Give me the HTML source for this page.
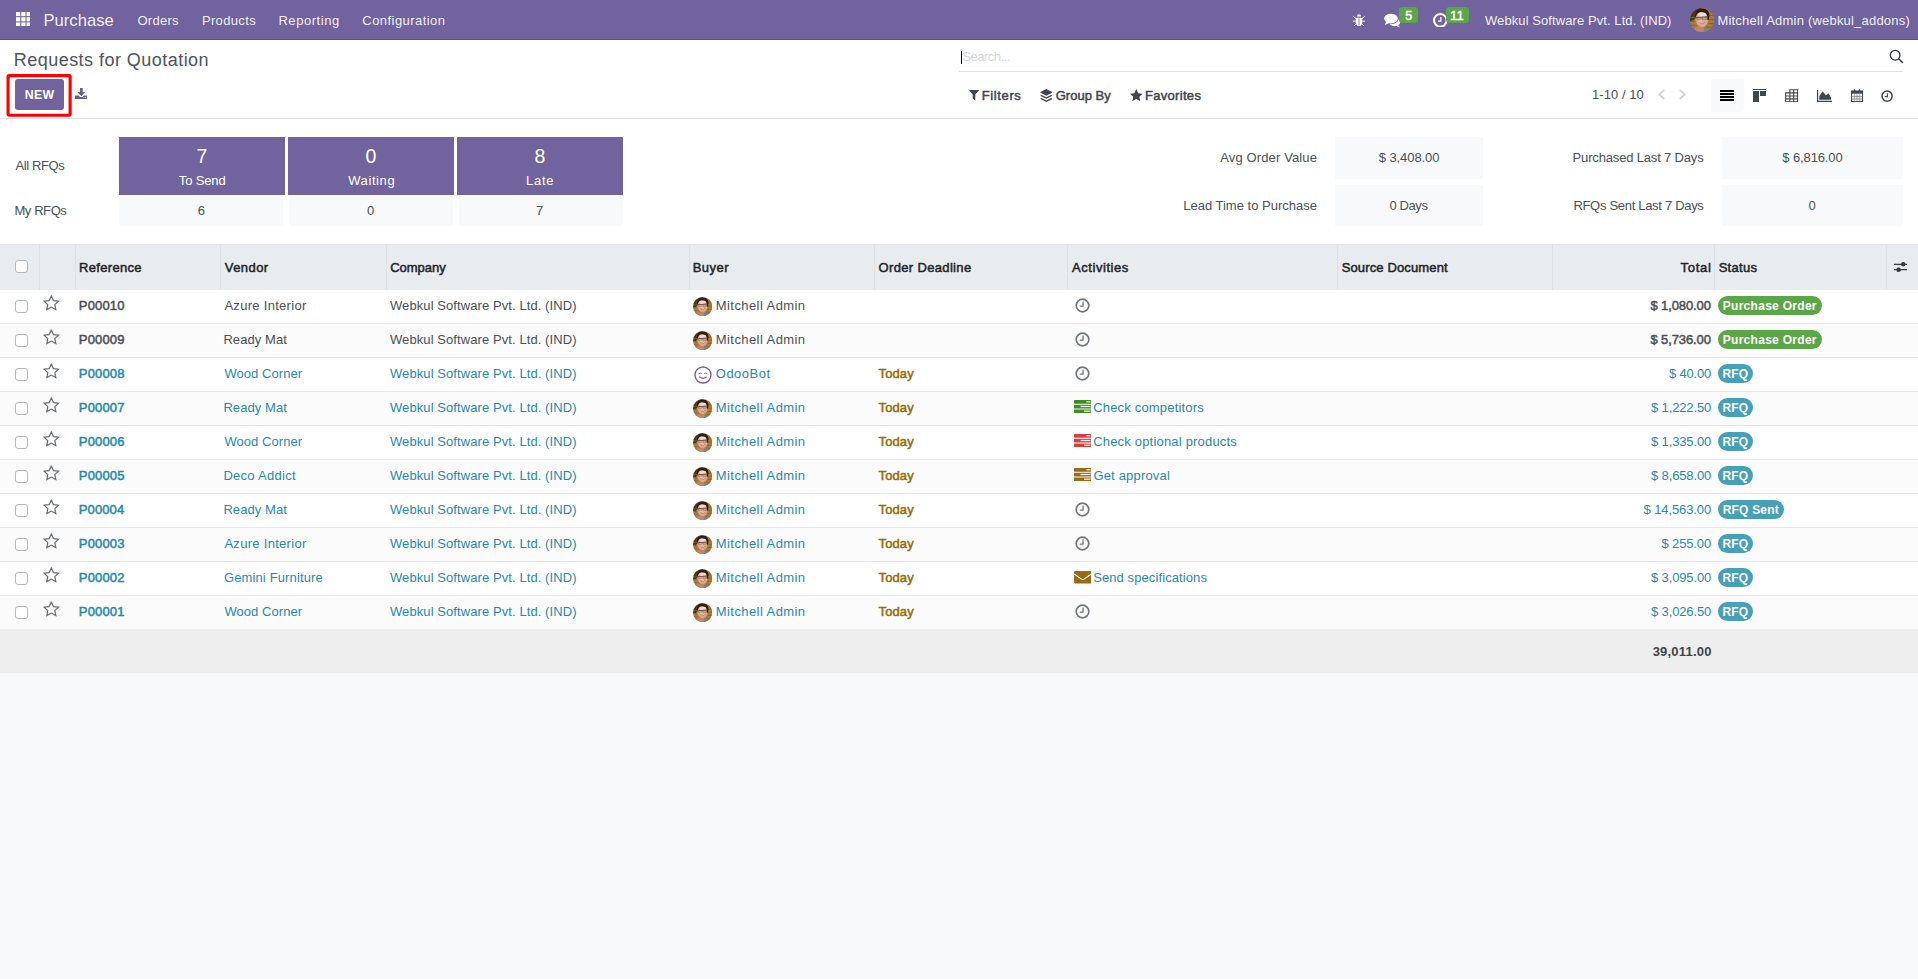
<!DOCTYPE html>
<html lang="en"><head><meta charset="utf-8"><title>Odoo - Requests for Quotation</title>
<style>
html,body{margin:0;padding:0}
body{width:1918px;height:979px;position:relative;overflow:hidden;background:#f8f9fa;font-family:"Liberation Sans", sans-serif;font-size:13px;color:#495057}
#app div,#app svg{position:absolute}
#app span{position:absolute;white-space:pre;line-height:normal}
</style></head><body><div id="app">
<div style="left:0px;top:0px;width:1918px;height:40px;background:#71639e;border-bottom:1px solid #5b4f82;box-sizing:border-box"></div>
<svg style="left:15.7px;top:11.7px;" width="14.8" height="14.6" viewBox="0 0 14 14" preserveAspectRatio="none"><g fill="#fff"><rect x="0" y="0" width="4" height="4"/><rect x="5" y="0" width="4" height="4"/><rect x="10" y="0" width="4" height="4"/><rect x="0" y="5" width="4" height="4"/><rect x="5" y="5" width="4" height="4"/><rect x="10" y="5" width="4" height="4"/><rect x="0" y="10" width="4" height="4"/><rect x="5" y="10" width="4" height="4"/><rect x="10" y="10" width="4" height="4"/></g></svg>
<svg style="left:1353px;top:12.6px;" width="12" height="13.6" viewBox="0 0 12 13.600" preserveAspectRatio="none"><g fill="#fff"><path d="M3.600 4.700h4.800c.5 0 .8.300.8.800v3.700c0 2.300-1.400 4-3.200 4s-3.200-1.700-3.200-4V5.500c0-.5.300-.8.800-.8z"/><path d="M3.900 3.600a2.100 2.400 0 0 1 4.200 0z"/></g><path d="M6 5.200v7.600" stroke="#71639e" stroke-width=".8"/><g stroke="#fff" stroke-width="1" fill="none"><path d="M0 8.200h2.800M9.200 8.200H12M.3 3.300l2.700 2.300M11.700 3.300L9 5.600M.8 13.300l2.400-2.500M11.200 13.300l-2.400-2.500"/></g></svg>
<svg style="left:1383px;top:13px;" width="18" height="15" viewBox="0 0 18 15" preserveAspectRatio="none"><ellipse cx="11.600" cy="9.300" rx="5.600" ry="3.900" fill="#fff"/><path d="M14.500 11.500l2.700 2.900-4.700-1.600z" fill="#fff"/><ellipse cx="7.900" cy="5.700" rx="7.600" ry="5.500" fill="#71639e"/><ellipse cx="7.900" cy="5.600" rx="6.900" ry="4.800" fill="#fff"/><path d="M3.300 8.500L1.700 12l4.800-1.900z" fill="#fff"/></svg>
<div style="left:1399.2px;top:7px;width:19px;height:16px;background:#5ba646;border-radius:3.500px"></div>
<svg style="left:1433px;top:12.6px;" width="14.6" height="14.6" viewBox="0 0 14.600 14.600" preserveAspectRatio="none"><circle cx="7.300" cy="7.300" r="6.300" fill="none" stroke="#fff" stroke-width="2"/><path d="M7.900 3.900v4.200H5" fill="none" stroke="#fff" stroke-width="1.300"/></svg>
<div style="left:1446px;top:7px;width:23px;height:16px;background:#5ba646;border-radius:3.500px"></div>
<svg style="left:0;top:0" width="0" height="0"><defs><clipPath id="avc"><circle cx="12" cy="12" r="12"/></clipPath><filter id="avb" x="-10%" y="-10%" width="120%" height="120%"><feGaussianBlur stdDeviation=".45"/></filter></defs></svg>
<svg style="left:1690px;top:8px;" width="24.2" height="24.2" viewBox="0 0 24 24" preserveAspectRatio="none"><g clip-path="url(#avc)"><g filter="url(#avb)"><rect x="-2" y="-2" width="28" height="28" fill="#a97d38"/><path d="M-2 -2h15l-3 5L4 12l-6 2z" fill="#4d3519"/><path d="M17 -2h9v9l-5-2z" fill="#7a5726"/><path d="M-1 9.500h6M-1 13.500h5.500M-1 17h6M18.500 7.500h7M18.500 11.500h7M18 15.500h8M16.500 19h9" stroke="#7e5b28" stroke-width=".9" fill="none"/><path d="M3 26c0-5 3-7.500 6.500-8.300l5 .3.500 8z" fill="#c18663"/><path d="M12.800 26l1.200-6.800c3 .3 6 1.800 6.800 6.800z" fill="#79828c"/><ellipse cx="11.700" cy="11.300" rx="6.100" ry="7.500" fill="#d9a88f" transform="rotate(-7 11.700 11.300)"/><ellipse cx="12.200" cy="6.600" rx="4.200" ry="2.400" fill="#efdad2"/><ellipse cx="10.300" cy="12.300" rx="2" ry="1.700" fill="#e6c2b0"/><path d="M5.300 9.300C4.300 3 8.500.2 12.600.5c4.700.3 7.200 3.500 6.600 7.800l-.6 3.600-1.500-.2c.6-3.600-.2-5.800-2.200-6.900-2.800-1.300-6.300-.9-7.900.8-.9 1-1.100 2.300-1.200 3.800z" fill="#2a1e17"/><path d="M5.400 9.600l12.600-.9" stroke="#4a3a33" stroke-width=".9" fill="none" opacity=".85"/><path d="M6.700 9.300h4.300v2.300H6.700zM12.300 8.900h4.300v2.400h-4.300z" fill="none" stroke="#5a4740" stroke-width=".55" opacity=".8"/><path d="M9.200 14.100c1.800.9 3.900.8 5.600-.4-.4 2.400-4.600 2.900-5.600.4z" fill="#b5605a"/><path d="M9.800 14.300c1.500.6 3.100.5 4.400-.2-.5 1.300-3.500 1.500-4.400.2z" fill="#fff"/></g></g></svg>
<div style="left:0px;top:40px;width:1918px;height:78px;background:#fff;border-bottom:1px solid #dee2e6"></div>
<svg style="left:5px;top:72px;" width="70" height="48" viewBox="0 0 70 48" preserveAspectRatio="none"><rect x="3.050" y="3.650" width="62.100" height="39.600" rx="1.200" fill="none" stroke="#ff0000" stroke-width="3.100"/></svg>
<div style="left:15px;top:79px;width:49px;height:31px;background:#71639e;border-radius:3px"></div>
<svg style="left:74.5px;top:87.9px;" width="12.4" height="11.1" viewBox="0 0 12.400 11.100" preserveAspectRatio="none"><g fill="#675b94"><path d="M4.900 0h2.800v3.900h2.500L6.300 8.200 2.400 3.900h2.500z"/><path d="M0 7.400h3.400l1.700 1.700h2.400l1.700-1.700h3.200v3.700H0z"/></g><circle cx="10.700" cy="9.500" r=".55" fill="#fff"/><circle cx="9" cy="9.500" r=".45" fill="#fff"/></svg>
<div style="left:959px;top:71px;width:944px;height:1px;background:#dee2e6;"></div>
<div style="left:961px;top:50.5px;width:1px;height:13.5px;background:#000;"></div>
<svg style="left:1889px;top:49px;" width="15" height="15" viewBox="0 0 15 15" preserveAspectRatio="none"><circle cx="6.150" cy="6.200" r="4.850" fill="none" stroke="#2f353c" stroke-width="1.300"/><path d="M9.700 9.800l3.800 3.700" stroke="#2f353c" stroke-width="1.500" stroke-linecap="round"/></svg>
<svg style="left:969.1px;top:90.4px;" width="10" height="10.6" viewBox="0 0 10 10.600" preserveAspectRatio="none"><path d="M.3 0h9.400q.5.100.2.600L6.300 4.600v6l-2.600-2V4.600L.100.600Q-.2.100.300 0z" fill="#3f4650"/></svg>
<svg style="left:1039.8px;top:88.8px;" width="12.6" height="13.1" viewBox="0 0 12.500 13" preserveAspectRatio="none"><g fill="#3f4650"><path d="M6.250 0l6.250 3.300-6.250 3.300L0 3.300z"/><path d="M1.600 5.900L0 6.700l6.250 3.100 6.250-3.100-1.600-.8-4.650 2.300z"/><path d="M1.600 9L0 9.800l6.250 3.100 6.250-3.100L10.900 9l-4.650 2.300z"/></g></svg>
<svg style="left:1130px;top:89px;" width="12.6" height="12.1" viewBox="0 0 12.500 12" preserveAspectRatio="none"><path d="M6.250 0l1.900 4.100 4.350.5-3.200 3 .85 4.400-3.900-2.200L2.350 12l.85-4.400L0 4.600l4.350-.5z" fill="#3f4650"/></svg>
<svg style="left:1657px;top:89px;" width="9" height="11" viewBox="0 0 9 11" preserveAspectRatio="none"><path d="M7.200 1L2.200 5.500l5 4.500" fill="none" stroke="#ced4da" stroke-width="1.700"/></svg>
<svg style="left:1678px;top:89px;" width="9" height="11" viewBox="0 0 9 11" preserveAspectRatio="none"><path d="M1.800 1l5 4.500-5 4.500" fill="none" stroke="#ced4da" stroke-width="1.700"/></svg>
<div style="left:1711px;top:79px;width:33px;height:33px;background:#f8f9fa;border-radius:3px"></div>
<div style="left:1720px;top:90px;width:14px;height:2.2px;background:#000;"></div>
<div style="left:1720px;top:93px;width:14px;height:2.2px;background:#000;"></div>
<div style="left:1720px;top:96px;width:14px;height:2.2px;background:#000;"></div>
<div style="left:1720px;top:99px;width:14px;height:2.2px;background:#000;"></div>
<div style="left:1753px;top:89px;width:13.3px;height:1px;background:#3f4650;"></div>
<div style="left:1753px;top:91px;width:6px;height:10.5px;background:#3f4650;"></div>
<div style="left:1760.2px;top:91px;width:6.1px;height:4.9px;background:#3f4650;"></div>
<svg style="left:1784.5px;top:88.6px;" width="14" height="13.4" viewBox="0 0 14 13.400" preserveAspectRatio="none"><g fill="none" stroke="#3f4650" stroke-width="1.050"><path d="M4.800 .7h7.800v12H.600V3.900H4.800zM.600 7h12M.600 9.900h12M4.800 3.900h7.800M4.800 .7v12M8.700 .7v12"/></g></svg>
<svg style="left:1816.5px;top:89.5px;" width="15.5" height="12" viewBox="0 0 15.500 12" preserveAspectRatio="none"><path d="M.600 0v11.400h14.900" fill="none" stroke="#3f4650" stroke-width="1.200"/><path d="M2.300 9.800V6.300L5.600 1.300l3.300 3.900 2.600-2 2.500 4.400v2.200z" fill="#3f4650"/></svg>
<svg style="left:1850.5px;top:88.8px;" width="13" height="13" viewBox="0 0 13 13" preserveAspectRatio="none"><rect x=".5" y="2" width="11" height="10.500" fill="#fff" stroke="#3f4650" stroke-width="1"/><rect x=".5" y="2" width="11" height="2.700" fill="#3f4650"/><g fill="none" stroke="#6d747c" stroke-width=".7"><path d="M.5 7.400h11M.5 10h11M3.300 4.700v7.800M6 4.700v7.800M8.700 4.700v7.800"/></g><g fill="#3f4650"><rect x="2.700" y=".3" width="1.600" height="3" rx=".8"/><rect x="7.700" y=".3" width="1.600" height="3" rx=".8"/></g></svg>
<svg style="left:1881.3px;top:89.8px;" width="12.2" height="12.2" viewBox="0 0 12 12" preserveAspectRatio="none"><circle cx="6" cy="6" r="5" fill="none" stroke="#3f4650" stroke-width="1.500"/><path d="M6.300 3.200v3.300H3.800" fill="none" stroke="#3f4650" stroke-width="1.100"/></svg>
<div style="left:0px;top:119px;width:1918px;height:125px;background:#fff;"></div>
<div style="left:119px;top:137px;width:166px;height:58px;background:#71639e;"></div>
<div style="left:119px;top:195px;width:164px;height:31px;background:#f8f9fa;border-radius:0 0 3px 3px"></div>
<div style="left:288px;top:137px;width:166px;height:58px;background:#71639e;"></div>
<div style="left:289px;top:195px;width:164px;height:31px;background:#f8f9fa;border-radius:0 0 3px 3px"></div>
<div style="left:457px;top:137px;width:166px;height:58px;background:#71639e;"></div>
<div style="left:459px;top:195px;width:164px;height:31px;background:#f8f9fa;border-radius:0 0 3px 3px"></div>
<div style="left:1335px;top:137px;width:148px;height:42px;background:#f8f9fa;"></div>
<div style="left:1335px;top:185px;width:148px;height:41px;background:#f8f9fa;"></div>
<div style="left:1722px;top:137px;width:181px;height:42px;background:#f8f9fa;"></div>
<div style="left:1722px;top:185px;width:181px;height:41px;background:#f8f9fa;"></div>
<div style="left:0px;top:244px;width:1918px;height:46px;background:#e9ecef;border-top:1px solid #dee2e6;box-sizing:border-box"></div>
<div style="left:39px;top:245px;width:1px;height:45px;background:#dde1e6;"></div>
<div style="left:75px;top:245px;width:1px;height:45px;background:#dde1e6;"></div>
<div style="left:220px;top:245px;width:1px;height:45px;background:#dde1e6;"></div>
<div style="left:386px;top:245px;width:1px;height:45px;background:#dde1e6;"></div>
<div style="left:689px;top:245px;width:1px;height:45px;background:#dde1e6;"></div>
<div style="left:874px;top:245px;width:1px;height:45px;background:#dde1e6;"></div>
<div style="left:1067px;top:245px;width:1px;height:45px;background:#dde1e6;"></div>
<div style="left:1337px;top:245px;width:1px;height:45px;background:#dde1e6;"></div>
<div style="left:1552px;top:245px;width:1px;height:45px;background:#dde1e6;"></div>
<div style="left:1714px;top:245px;width:1px;height:45px;background:#dde1e6;"></div>
<div style="left:1886px;top:245px;width:1px;height:45px;background:#dde1e6;"></div>
<div style="left:15px;top:260px;width:13px;height:13px;background:#fff;border:1px solid #b6b8ba;border-radius:3px;box-sizing:border-box"></div>
<svg style="left:1893.5px;top:261px;" width="13.5" height="12" viewBox="0 0 13.500 12" preserveAspectRatio="none"><g stroke="#343a40" stroke-width="1.300"><path d="M0 3.300h13.500M0 8.700h13.500"/></g><circle cx="9.300" cy="3.300" r="2.300" fill="#343a40"/><circle cx="4.600" cy="8.700" r="2.300" fill="#343a40"/></svg>
<div style="left:0px;top:290px;width:1918px;height:34px;background:#fff;border-bottom:1px solid #e3e7ea;box-sizing:border-box"></div>
<div style="left:15px;top:300px;width:13px;height:13px;background:#fff;border:1px solid #b6b8ba;border-radius:3px;box-sizing:border-box"></div>
<svg style="left:42.6px;top:295.3px;overflow:visible" width="16.6" height="16" viewBox="0 0 16 16" preserveAspectRatio="none"><path d="M8 1.100l2.100 4.500 4.800.6-3.500 3.400.9 4.900L8 12.100l-4.300 2.400.9-4.900L1.100 6.200l4.800-.6z" fill="none" stroke="#6a6e73" stroke-width="1.200" stroke-linejoin="miter"/></svg>
<svg style="left:692.7px;top:296.8px;" width="19.3" height="19.3" viewBox="0 0 24 24" preserveAspectRatio="none"><g clip-path="url(#avc)"><g filter="url(#avb)"><rect x="-2" y="-2" width="28" height="28" fill="#a97d38"/><path d="M-2 -2h15l-3 5L4 12l-6 2z" fill="#4d3519"/><path d="M17 -2h9v9l-5-2z" fill="#7a5726"/><path d="M-1 9.500h6M-1 13.500h5.500M-1 17h6M18.500 7.500h7M18.500 11.500h7M18 15.500h8M16.500 19h9" stroke="#7e5b28" stroke-width=".9" fill="none"/><path d="M3 26c0-5 3-7.500 6.500-8.300l5 .3.500 8z" fill="#c18663"/><path d="M12.800 26l1.200-6.800c3 .3 6 1.800 6.800 6.800z" fill="#79828c"/><ellipse cx="11.700" cy="11.300" rx="6.100" ry="7.500" fill="#d9a88f" transform="rotate(-7 11.700 11.300)"/><ellipse cx="12.200" cy="6.600" rx="4.200" ry="2.400" fill="#efdad2"/><ellipse cx="10.300" cy="12.300" rx="2" ry="1.700" fill="#e6c2b0"/><path d="M5.300 9.300C4.300 3 8.500.2 12.600.5c4.700.3 7.200 3.500 6.600 7.800l-.6 3.600-1.500-.2c.6-3.600-.2-5.800-2.200-6.900-2.800-1.300-6.300-.9-7.900.8-.9 1-1.100 2.300-1.200 3.800z" fill="#2a1e17"/><path d="M5.400 9.600l12.600-.9" stroke="#4a3a33" stroke-width=".9" fill="none" opacity=".85"/><path d="M6.700 9.300h4.300v2.300H6.700zM12.300 8.900h4.300v2.400h-4.300z" fill="none" stroke="#5a4740" stroke-width=".55" opacity=".8"/><path d="M9.200 14.100c1.800.9 3.900.8 5.600-.4-.4 2.400-4.600 2.900-5.600.4z" fill="#b5605a"/><path d="M9.800 14.300c1.500.6 3.100.5 4.400-.2-.5 1.300-3.500 1.500-4.400.2z" fill="#fff"/></g></g></svg>
<svg style="left:1074.7px;top:297.7px;" width="15" height="15" viewBox="0 0 15 15" preserveAspectRatio="none"><circle cx="7.500" cy="7.500" r="6.300" fill="none" stroke="#6f767d" stroke-width="1.700"/><path d="M8 3.600v4.500H4.700" fill="none" stroke="#6f767d" stroke-width="1.300"/></svg>
<div style="left:1718px;top:296px;width:104px;height:19px;background:#5ba647;border-radius:10px"></div>
<div style="left:0px;top:324px;width:1918px;height:34px;background:#fbfbfb;border-bottom:1px solid #e3e7ea;box-sizing:border-box"></div>
<div style="left:15px;top:334px;width:13px;height:13px;background:#fff;border:1px solid #b6b8ba;border-radius:3px;box-sizing:border-box"></div>
<svg style="left:42.6px;top:329.3px;overflow:visible" width="16.6" height="16" viewBox="0 0 16 16" preserveAspectRatio="none"><path d="M8 1.100l2.100 4.500 4.800.6-3.500 3.400.9 4.900L8 12.100l-4.300 2.400.9-4.900L1.100 6.200l4.800-.6z" fill="none" stroke="#6a6e73" stroke-width="1.200" stroke-linejoin="miter"/></svg>
<svg style="left:692.7px;top:330.8px;" width="19.3" height="19.3" viewBox="0 0 24 24" preserveAspectRatio="none"><g clip-path="url(#avc)"><g filter="url(#avb)"><rect x="-2" y="-2" width="28" height="28" fill="#a97d38"/><path d="M-2 -2h15l-3 5L4 12l-6 2z" fill="#4d3519"/><path d="M17 -2h9v9l-5-2z" fill="#7a5726"/><path d="M-1 9.500h6M-1 13.500h5.500M-1 17h6M18.500 7.500h7M18.500 11.500h7M18 15.500h8M16.500 19h9" stroke="#7e5b28" stroke-width=".9" fill="none"/><path d="M3 26c0-5 3-7.500 6.500-8.300l5 .3.500 8z" fill="#c18663"/><path d="M12.800 26l1.200-6.800c3 .3 6 1.800 6.800 6.800z" fill="#79828c"/><ellipse cx="11.700" cy="11.300" rx="6.100" ry="7.500" fill="#d9a88f" transform="rotate(-7 11.700 11.300)"/><ellipse cx="12.200" cy="6.600" rx="4.200" ry="2.400" fill="#efdad2"/><ellipse cx="10.300" cy="12.300" rx="2" ry="1.700" fill="#e6c2b0"/><path d="M5.300 9.300C4.300 3 8.500.2 12.600.5c4.700.3 7.200 3.500 6.600 7.800l-.6 3.600-1.500-.2c.6-3.600-.2-5.800-2.200-6.900-2.800-1.300-6.300-.9-7.900.8-.9 1-1.100 2.300-1.200 3.800z" fill="#2a1e17"/><path d="M5.400 9.600l12.600-.9" stroke="#4a3a33" stroke-width=".9" fill="none" opacity=".85"/><path d="M6.700 9.300h4.300v2.300H6.700zM12.300 8.900h4.300v2.400h-4.300z" fill="none" stroke="#5a4740" stroke-width=".55" opacity=".8"/><path d="M9.200 14.100c1.800.9 3.900.8 5.600-.4-.4 2.400-4.600 2.900-5.600.4z" fill="#b5605a"/><path d="M9.800 14.300c1.500.6 3.100.5 4.400-.2-.5 1.300-3.500 1.500-4.400.2z" fill="#fff"/></g></g></svg>
<svg style="left:1074.7px;top:331.7px;" width="15" height="15" viewBox="0 0 15 15" preserveAspectRatio="none"><circle cx="7.500" cy="7.500" r="6.300" fill="none" stroke="#6f767d" stroke-width="1.700"/><path d="M8 3.600v4.500H4.700" fill="none" stroke="#6f767d" stroke-width="1.300"/></svg>
<div style="left:1718px;top:330px;width:104px;height:19px;background:#5ba647;border-radius:10px"></div>
<div style="left:0px;top:358px;width:1918px;height:34px;background:#fff;border-bottom:1px solid #e3e7ea;box-sizing:border-box"></div>
<div style="left:15px;top:368px;width:13px;height:13px;background:#fff;border:1px solid #b6b8ba;border-radius:3px;box-sizing:border-box"></div>
<svg style="left:42.6px;top:363.3px;overflow:visible" width="16.6" height="16" viewBox="0 0 16 16" preserveAspectRatio="none"><path d="M8 1.100l2.100 4.500 4.800.6-3.500 3.400.9 4.900L8 12.100l-4.300 2.400.9-4.900L1.100 6.200l4.800-.6z" fill="none" stroke="#6a6e73" stroke-width="1.200" stroke-linejoin="miter"/></svg>
<svg style="left:693.5px;top:365.5px;" width="18" height="18" viewBox="0 0 18 18" preserveAspectRatio="none"><circle cx="9" cy="9" r="8" fill="#fff" stroke="#8d5f85" stroke-width="1.400"/><path d="M4.700 7.600q1.500-1 3 0M10.300 7.600q1.500-1 3 0" fill="none" stroke="#8d5f85" stroke-width="1"/><path d="M5.200 10.800q3.800 3.200 7.600 0" fill="none" stroke="#8d5f85" stroke-width="1.200"/></svg>
<svg style="left:1074.7px;top:365.7px;" width="15" height="15" viewBox="0 0 15 15" preserveAspectRatio="none"><circle cx="7.500" cy="7.500" r="6.300" fill="none" stroke="#6f767d" stroke-width="1.700"/><path d="M8 3.600v4.500H4.700" fill="none" stroke="#6f767d" stroke-width="1.300"/></svg>
<div style="left:1718px;top:364px;width:35px;height:19px;background:#46a0b8;border-radius:10px"></div>
<div style="left:0px;top:392px;width:1918px;height:34px;background:#fbfbfb;border-bottom:1px solid #e3e7ea;box-sizing:border-box"></div>
<div style="left:15px;top:402px;width:13px;height:13px;background:#fff;border:1px solid #b6b8ba;border-radius:3px;box-sizing:border-box"></div>
<svg style="left:42.6px;top:397.3px;overflow:visible" width="16.6" height="16" viewBox="0 0 16 16" preserveAspectRatio="none"><path d="M8 1.100l2.100 4.500 4.800.6-3.500 3.400.9 4.900L8 12.100l-4.300 2.400.9-4.900L1.100 6.200l4.800-.6z" fill="none" stroke="#6a6e73" stroke-width="1.200" stroke-linejoin="miter"/></svg>
<svg style="left:692.7px;top:398.8px;" width="19.3" height="19.3" viewBox="0 0 24 24" preserveAspectRatio="none"><g clip-path="url(#avc)"><g filter="url(#avb)"><rect x="-2" y="-2" width="28" height="28" fill="#a97d38"/><path d="M-2 -2h15l-3 5L4 12l-6 2z" fill="#4d3519"/><path d="M17 -2h9v9l-5-2z" fill="#7a5726"/><path d="M-1 9.500h6M-1 13.500h5.500M-1 17h6M18.500 7.500h7M18.500 11.500h7M18 15.500h8M16.500 19h9" stroke="#7e5b28" stroke-width=".9" fill="none"/><path d="M3 26c0-5 3-7.500 6.500-8.300l5 .3.500 8z" fill="#c18663"/><path d="M12.800 26l1.200-6.800c3 .3 6 1.800 6.800 6.800z" fill="#79828c"/><ellipse cx="11.700" cy="11.300" rx="6.100" ry="7.500" fill="#d9a88f" transform="rotate(-7 11.700 11.300)"/><ellipse cx="12.200" cy="6.600" rx="4.200" ry="2.400" fill="#efdad2"/><ellipse cx="10.300" cy="12.300" rx="2" ry="1.700" fill="#e6c2b0"/><path d="M5.300 9.300C4.300 3 8.500.2 12.600.5c4.700.3 7.200 3.500 6.600 7.800l-.6 3.600-1.500-.2c.6-3.600-.2-5.800-2.200-6.900-2.800-1.300-6.300-.9-7.900.8-.9 1-1.100 2.300-1.200 3.800z" fill="#2a1e17"/><path d="M5.400 9.600l12.600-.9" stroke="#4a3a33" stroke-width=".9" fill="none" opacity=".85"/><path d="M6.700 9.300h4.300v2.300H6.700zM12.300 8.900h4.300v2.400h-4.300z" fill="none" stroke="#5a4740" stroke-width=".55" opacity=".8"/><path d="M9.200 14.100c1.800.9 3.900.8 5.600-.4-.4 2.400-4.600 2.900-5.600.4z" fill="#b5605a"/><path d="M9.800 14.300c1.500.6 3.100.5 4.400-.2-.5 1.300-3.500 1.500-4.400.2z" fill="#fff"/></g></g></svg>
<svg style="left:1073.6px;top:399.7px;" width="17.5" height="13.2" viewBox="0 0 17.500 13.200" preserveAspectRatio="none"><g fill="#3f8c1f"><rect y="0" width="17.500" height="3.700" rx=".4"/><rect y="4.700" width="17.500" height="3.700" rx=".4"/><rect y="9.400" width="17.500" height="3.700" rx=".4"/></g><g fill="#fff" opacity=".92"><rect x="12.300" y="1.200" width="4.200" height="1.200"/><rect x="6.500" y="5.900" width="10" height="1.200"/><rect x="10" y="10.600" width="6.500" height="1.200"/></g></svg>
<div style="left:1718px;top:398px;width:35px;height:19px;background:#46a0b8;border-radius:10px"></div>
<div style="left:0px;top:426px;width:1918px;height:34px;background:#fff;border-bottom:1px solid #e3e7ea;box-sizing:border-box"></div>
<div style="left:15px;top:436px;width:13px;height:13px;background:#fff;border:1px solid #b6b8ba;border-radius:3px;box-sizing:border-box"></div>
<svg style="left:42.6px;top:431.3px;overflow:visible" width="16.6" height="16" viewBox="0 0 16 16" preserveAspectRatio="none"><path d="M8 1.100l2.100 4.500 4.800.6-3.500 3.400.9 4.900L8 12.100l-4.300 2.400.9-4.900L1.100 6.200l4.800-.6z" fill="none" stroke="#6a6e73" stroke-width="1.200" stroke-linejoin="miter"/></svg>
<svg style="left:692.7px;top:432.8px;" width="19.3" height="19.3" viewBox="0 0 24 24" preserveAspectRatio="none"><g clip-path="url(#avc)"><g filter="url(#avb)"><rect x="-2" y="-2" width="28" height="28" fill="#a97d38"/><path d="M-2 -2h15l-3 5L4 12l-6 2z" fill="#4d3519"/><path d="M17 -2h9v9l-5-2z" fill="#7a5726"/><path d="M-1 9.500h6M-1 13.500h5.500M-1 17h6M18.500 7.500h7M18.500 11.500h7M18 15.500h8M16.500 19h9" stroke="#7e5b28" stroke-width=".9" fill="none"/><path d="M3 26c0-5 3-7.500 6.500-8.300l5 .3.500 8z" fill="#c18663"/><path d="M12.800 26l1.200-6.800c3 .3 6 1.800 6.800 6.800z" fill="#79828c"/><ellipse cx="11.700" cy="11.300" rx="6.100" ry="7.500" fill="#d9a88f" transform="rotate(-7 11.700 11.300)"/><ellipse cx="12.200" cy="6.600" rx="4.200" ry="2.400" fill="#efdad2"/><ellipse cx="10.300" cy="12.300" rx="2" ry="1.700" fill="#e6c2b0"/><path d="M5.300 9.300C4.300 3 8.500.2 12.600.5c4.700.3 7.200 3.500 6.600 7.800l-.6 3.600-1.500-.2c.6-3.600-.2-5.800-2.200-6.900-2.800-1.300-6.300-.9-7.900.8-.9 1-1.100 2.300-1.200 3.800z" fill="#2a1e17"/><path d="M5.400 9.600l12.600-.9" stroke="#4a3a33" stroke-width=".9" fill="none" opacity=".85"/><path d="M6.700 9.300h4.300v2.300H6.700zM12.300 8.900h4.300v2.400h-4.300z" fill="none" stroke="#5a4740" stroke-width=".55" opacity=".8"/><path d="M9.200 14.100c1.800.9 3.900.8 5.600-.4-.4 2.400-4.600 2.900-5.600.4z" fill="#b5605a"/><path d="M9.800 14.300c1.500.6 3.100.5 4.400-.2-.5 1.300-3.500 1.500-4.400.2z" fill="#fff"/></g></g></svg>
<svg style="left:1073.6px;top:433.7px;" width="17.5" height="13.2" viewBox="0 0 17.500 13.200" preserveAspectRatio="none"><g fill="#d93f3f"><rect y="0" width="17.500" height="3.700" rx=".4"/><rect y="4.700" width="17.500" height="3.700" rx=".4"/><rect y="9.400" width="17.500" height="3.700" rx=".4"/></g><g fill="#fff" opacity=".92"><rect x="12.300" y="1.200" width="4.200" height="1.200"/><rect x="6.500" y="5.900" width="10" height="1.200"/><rect x="10" y="10.600" width="6.500" height="1.200"/></g></svg>
<div style="left:1718px;top:432px;width:35px;height:19px;background:#46a0b8;border-radius:10px"></div>
<div style="left:0px;top:460px;width:1918px;height:34px;background:#fbfbfb;border-bottom:1px solid #e3e7ea;box-sizing:border-box"></div>
<div style="left:15px;top:470px;width:13px;height:13px;background:#fff;border:1px solid #b6b8ba;border-radius:3px;box-sizing:border-box"></div>
<svg style="left:42.6px;top:465.3px;overflow:visible" width="16.6" height="16" viewBox="0 0 16 16" preserveAspectRatio="none"><path d="M8 1.100l2.100 4.500 4.800.6-3.500 3.400.9 4.900L8 12.100l-4.300 2.400.9-4.900L1.100 6.200l4.800-.6z" fill="none" stroke="#6a6e73" stroke-width="1.200" stroke-linejoin="miter"/></svg>
<svg style="left:692.7px;top:466.8px;" width="19.3" height="19.3" viewBox="0 0 24 24" preserveAspectRatio="none"><g clip-path="url(#avc)"><g filter="url(#avb)"><rect x="-2" y="-2" width="28" height="28" fill="#a97d38"/><path d="M-2 -2h15l-3 5L4 12l-6 2z" fill="#4d3519"/><path d="M17 -2h9v9l-5-2z" fill="#7a5726"/><path d="M-1 9.500h6M-1 13.500h5.500M-1 17h6M18.500 7.500h7M18.500 11.500h7M18 15.500h8M16.500 19h9" stroke="#7e5b28" stroke-width=".9" fill="none"/><path d="M3 26c0-5 3-7.500 6.500-8.300l5 .3.500 8z" fill="#c18663"/><path d="M12.800 26l1.200-6.800c3 .3 6 1.800 6.800 6.800z" fill="#79828c"/><ellipse cx="11.700" cy="11.300" rx="6.100" ry="7.500" fill="#d9a88f" transform="rotate(-7 11.700 11.300)"/><ellipse cx="12.200" cy="6.600" rx="4.200" ry="2.400" fill="#efdad2"/><ellipse cx="10.300" cy="12.300" rx="2" ry="1.700" fill="#e6c2b0"/><path d="M5.300 9.300C4.300 3 8.500.2 12.600.5c4.700.3 7.200 3.500 6.600 7.800l-.6 3.600-1.500-.2c.6-3.600-.2-5.800-2.200-6.900-2.800-1.300-6.300-.9-7.900.8-.9 1-1.100 2.300-1.200 3.800z" fill="#2a1e17"/><path d="M5.400 9.600l12.600-.9" stroke="#4a3a33" stroke-width=".9" fill="none" opacity=".85"/><path d="M6.700 9.300h4.300v2.300H6.700zM12.300 8.900h4.300v2.400h-4.300z" fill="none" stroke="#5a4740" stroke-width=".55" opacity=".8"/><path d="M9.200 14.100c1.800.9 3.900.8 5.600-.4-.4 2.400-4.600 2.900-5.600.4z" fill="#b5605a"/><path d="M9.800 14.300c1.500.6 3.100.5 4.400-.2-.5 1.300-3.500 1.500-4.400.2z" fill="#fff"/></g></g></svg>
<svg style="left:1073.6px;top:467.7px;" width="17.5" height="13.2" viewBox="0 0 17.500 13.200" preserveAspectRatio="none"><g fill="#9a6b14"><rect y="0" width="17.500" height="3.700" rx=".4"/><rect y="4.700" width="17.500" height="3.700" rx=".4"/><rect y="9.400" width="17.500" height="3.700" rx=".4"/></g><g fill="#fff" opacity=".92"><rect x="12.300" y="1.200" width="4.200" height="1.200"/><rect x="6.500" y="5.900" width="10" height="1.200"/><rect x="10" y="10.600" width="6.500" height="1.200"/></g></svg>
<div style="left:1718px;top:466px;width:35px;height:19px;background:#46a0b8;border-radius:10px"></div>
<div style="left:0px;top:494px;width:1918px;height:34px;background:#fff;border-bottom:1px solid #e3e7ea;box-sizing:border-box"></div>
<div style="left:15px;top:504px;width:13px;height:13px;background:#fff;border:1px solid #b6b8ba;border-radius:3px;box-sizing:border-box"></div>
<svg style="left:42.6px;top:499.3px;overflow:visible" width="16.6" height="16" viewBox="0 0 16 16" preserveAspectRatio="none"><path d="M8 1.100l2.100 4.500 4.800.6-3.500 3.400.9 4.900L8 12.100l-4.300 2.400.9-4.900L1.100 6.200l4.800-.6z" fill="none" stroke="#6a6e73" stroke-width="1.200" stroke-linejoin="miter"/></svg>
<svg style="left:692.7px;top:500.8px;" width="19.3" height="19.3" viewBox="0 0 24 24" preserveAspectRatio="none"><g clip-path="url(#avc)"><g filter="url(#avb)"><rect x="-2" y="-2" width="28" height="28" fill="#a97d38"/><path d="M-2 -2h15l-3 5L4 12l-6 2z" fill="#4d3519"/><path d="M17 -2h9v9l-5-2z" fill="#7a5726"/><path d="M-1 9.500h6M-1 13.500h5.500M-1 17h6M18.500 7.500h7M18.500 11.500h7M18 15.500h8M16.500 19h9" stroke="#7e5b28" stroke-width=".9" fill="none"/><path d="M3 26c0-5 3-7.500 6.500-8.300l5 .3.500 8z" fill="#c18663"/><path d="M12.800 26l1.200-6.800c3 .3 6 1.800 6.800 6.800z" fill="#79828c"/><ellipse cx="11.700" cy="11.300" rx="6.100" ry="7.500" fill="#d9a88f" transform="rotate(-7 11.700 11.300)"/><ellipse cx="12.200" cy="6.600" rx="4.200" ry="2.400" fill="#efdad2"/><ellipse cx="10.300" cy="12.300" rx="2" ry="1.700" fill="#e6c2b0"/><path d="M5.300 9.300C4.300 3 8.500.2 12.600.5c4.700.3 7.200 3.500 6.600 7.800l-.6 3.600-1.500-.2c.6-3.600-.2-5.800-2.200-6.900-2.800-1.300-6.300-.9-7.900.8-.9 1-1.100 2.300-1.200 3.800z" fill="#2a1e17"/><path d="M5.400 9.600l12.600-.9" stroke="#4a3a33" stroke-width=".9" fill="none" opacity=".85"/><path d="M6.700 9.300h4.300v2.300H6.700zM12.300 8.900h4.300v2.400h-4.300z" fill="none" stroke="#5a4740" stroke-width=".55" opacity=".8"/><path d="M9.200 14.100c1.800.9 3.900.8 5.600-.4-.4 2.400-4.600 2.900-5.600.4z" fill="#b5605a"/><path d="M9.800 14.300c1.500.6 3.100.5 4.400-.2-.5 1.300-3.500 1.500-4.400.2z" fill="#fff"/></g></g></svg>
<svg style="left:1074.7px;top:501.7px;" width="15" height="15" viewBox="0 0 15 15" preserveAspectRatio="none"><circle cx="7.500" cy="7.500" r="6.300" fill="none" stroke="#6f767d" stroke-width="1.700"/><path d="M8 3.600v4.500H4.700" fill="none" stroke="#6f767d" stroke-width="1.300"/></svg>
<div style="left:1718px;top:500px;width:66px;height:19px;background:#46a0b8;border-radius:10px"></div>
<div style="left:0px;top:528px;width:1918px;height:34px;background:#fbfbfb;border-bottom:1px solid #e3e7ea;box-sizing:border-box"></div>
<div style="left:15px;top:538px;width:13px;height:13px;background:#fff;border:1px solid #b6b8ba;border-radius:3px;box-sizing:border-box"></div>
<svg style="left:42.6px;top:533.3px;overflow:visible" width="16.6" height="16" viewBox="0 0 16 16" preserveAspectRatio="none"><path d="M8 1.100l2.100 4.500 4.800.6-3.500 3.400.9 4.900L8 12.100l-4.300 2.400.9-4.900L1.100 6.200l4.800-.6z" fill="none" stroke="#6a6e73" stroke-width="1.200" stroke-linejoin="miter"/></svg>
<svg style="left:692.7px;top:534.8px;" width="19.3" height="19.3" viewBox="0 0 24 24" preserveAspectRatio="none"><g clip-path="url(#avc)"><g filter="url(#avb)"><rect x="-2" y="-2" width="28" height="28" fill="#a97d38"/><path d="M-2 -2h15l-3 5L4 12l-6 2z" fill="#4d3519"/><path d="M17 -2h9v9l-5-2z" fill="#7a5726"/><path d="M-1 9.500h6M-1 13.500h5.500M-1 17h6M18.500 7.500h7M18.500 11.500h7M18 15.500h8M16.500 19h9" stroke="#7e5b28" stroke-width=".9" fill="none"/><path d="M3 26c0-5 3-7.500 6.500-8.300l5 .3.500 8z" fill="#c18663"/><path d="M12.800 26l1.200-6.800c3 .3 6 1.800 6.800 6.800z" fill="#79828c"/><ellipse cx="11.700" cy="11.300" rx="6.100" ry="7.500" fill="#d9a88f" transform="rotate(-7 11.700 11.300)"/><ellipse cx="12.200" cy="6.600" rx="4.200" ry="2.400" fill="#efdad2"/><ellipse cx="10.300" cy="12.300" rx="2" ry="1.700" fill="#e6c2b0"/><path d="M5.300 9.300C4.300 3 8.500.2 12.600.5c4.700.3 7.200 3.500 6.600 7.800l-.6 3.600-1.500-.2c.6-3.600-.2-5.800-2.200-6.900-2.800-1.300-6.300-.9-7.900.8-.9 1-1.100 2.300-1.200 3.800z" fill="#2a1e17"/><path d="M5.400 9.600l12.600-.9" stroke="#4a3a33" stroke-width=".9" fill="none" opacity=".85"/><path d="M6.700 9.300h4.300v2.300H6.700zM12.300 8.900h4.300v2.400h-4.300z" fill="none" stroke="#5a4740" stroke-width=".55" opacity=".8"/><path d="M9.200 14.100c1.800.9 3.900.8 5.600-.4-.4 2.400-4.600 2.900-5.600.4z" fill="#b5605a"/><path d="M9.800 14.300c1.500.6 3.100.5 4.400-.2-.5 1.300-3.500 1.500-4.400.2z" fill="#fff"/></g></g></svg>
<svg style="left:1074.7px;top:535.7px;" width="15" height="15" viewBox="0 0 15 15" preserveAspectRatio="none"><circle cx="7.500" cy="7.500" r="6.300" fill="none" stroke="#6f767d" stroke-width="1.700"/><path d="M8 3.600v4.500H4.700" fill="none" stroke="#6f767d" stroke-width="1.300"/></svg>
<div style="left:1718px;top:534px;width:35px;height:19px;background:#46a0b8;border-radius:10px"></div>
<div style="left:0px;top:562px;width:1918px;height:34px;background:#fff;border-bottom:1px solid #e3e7ea;box-sizing:border-box"></div>
<div style="left:15px;top:572px;width:13px;height:13px;background:#fff;border:1px solid #b6b8ba;border-radius:3px;box-sizing:border-box"></div>
<svg style="left:42.6px;top:567.3px;overflow:visible" width="16.6" height="16" viewBox="0 0 16 16" preserveAspectRatio="none"><path d="M8 1.100l2.100 4.500 4.800.6-3.500 3.400.9 4.900L8 12.100l-4.300 2.400.9-4.900L1.100 6.200l4.800-.6z" fill="none" stroke="#6a6e73" stroke-width="1.200" stroke-linejoin="miter"/></svg>
<svg style="left:692.7px;top:568.8px;" width="19.3" height="19.3" viewBox="0 0 24 24" preserveAspectRatio="none"><g clip-path="url(#avc)"><g filter="url(#avb)"><rect x="-2" y="-2" width="28" height="28" fill="#a97d38"/><path d="M-2 -2h15l-3 5L4 12l-6 2z" fill="#4d3519"/><path d="M17 -2h9v9l-5-2z" fill="#7a5726"/><path d="M-1 9.500h6M-1 13.500h5.500M-1 17h6M18.500 7.500h7M18.500 11.500h7M18 15.500h8M16.500 19h9" stroke="#7e5b28" stroke-width=".9" fill="none"/><path d="M3 26c0-5 3-7.500 6.500-8.300l5 .3.500 8z" fill="#c18663"/><path d="M12.800 26l1.200-6.800c3 .3 6 1.800 6.800 6.800z" fill="#79828c"/><ellipse cx="11.700" cy="11.300" rx="6.100" ry="7.500" fill="#d9a88f" transform="rotate(-7 11.700 11.300)"/><ellipse cx="12.200" cy="6.600" rx="4.200" ry="2.400" fill="#efdad2"/><ellipse cx="10.300" cy="12.300" rx="2" ry="1.700" fill="#e6c2b0"/><path d="M5.300 9.300C4.300 3 8.500.2 12.600.5c4.700.3 7.200 3.500 6.600 7.800l-.6 3.600-1.500-.2c.6-3.600-.2-5.800-2.200-6.900-2.800-1.300-6.300-.9-7.900.8-.9 1-1.100 2.300-1.200 3.800z" fill="#2a1e17"/><path d="M5.400 9.600l12.600-.9" stroke="#4a3a33" stroke-width=".9" fill="none" opacity=".85"/><path d="M6.700 9.300h4.300v2.300H6.700zM12.300 8.900h4.300v2.400h-4.300z" fill="none" stroke="#5a4740" stroke-width=".55" opacity=".8"/><path d="M9.200 14.100c1.800.9 3.900.8 5.600-.4-.4 2.400-4.600 2.900-5.600.4z" fill="#b5605a"/><path d="M9.800 14.300c1.500.6 3.100.5 4.400-.2-.5 1.300-3.500 1.500-4.400.2z" fill="#fff"/></g></g></svg>
<svg style="left:1073.5px;top:571.2px;" width="17.5" height="12.6" viewBox="0 0 17.500 12.600" preserveAspectRatio="none"><rect width="17.500" height="12.600" rx="1.300" fill="#9a6b14"/><path d="M-.3 2.700l7.800 5.400q1.250 .8 2.500 0l7.800-5.400" fill="none" stroke="#fff" stroke-width="1.100"/></svg>
<div style="left:1718px;top:568px;width:35px;height:19px;background:#46a0b8;border-radius:10px"></div>
<div style="left:0px;top:596px;width:1918px;height:34px;background:#fbfbfb;"></div>
<div style="left:15px;top:606px;width:13px;height:13px;background:#fff;border:1px solid #b6b8ba;border-radius:3px;box-sizing:border-box"></div>
<svg style="left:42.6px;top:601.3px;overflow:visible" width="16.6" height="16" viewBox="0 0 16 16" preserveAspectRatio="none"><path d="M8 1.100l2.100 4.500 4.800.6-3.500 3.400.9 4.900L8 12.100l-4.300 2.400.9-4.900L1.100 6.200l4.800-.6z" fill="none" stroke="#6a6e73" stroke-width="1.200" stroke-linejoin="miter"/></svg>
<svg style="left:692.7px;top:602.8px;" width="19.3" height="19.3" viewBox="0 0 24 24" preserveAspectRatio="none"><g clip-path="url(#avc)"><g filter="url(#avb)"><rect x="-2" y="-2" width="28" height="28" fill="#a97d38"/><path d="M-2 -2h15l-3 5L4 12l-6 2z" fill="#4d3519"/><path d="M17 -2h9v9l-5-2z" fill="#7a5726"/><path d="M-1 9.500h6M-1 13.500h5.500M-1 17h6M18.500 7.500h7M18.500 11.500h7M18 15.500h8M16.500 19h9" stroke="#7e5b28" stroke-width=".9" fill="none"/><path d="M3 26c0-5 3-7.500 6.500-8.300l5 .3.500 8z" fill="#c18663"/><path d="M12.800 26l1.200-6.800c3 .3 6 1.800 6.800 6.800z" fill="#79828c"/><ellipse cx="11.700" cy="11.300" rx="6.100" ry="7.500" fill="#d9a88f" transform="rotate(-7 11.700 11.300)"/><ellipse cx="12.200" cy="6.600" rx="4.200" ry="2.400" fill="#efdad2"/><ellipse cx="10.300" cy="12.300" rx="2" ry="1.700" fill="#e6c2b0"/><path d="M5.300 9.300C4.300 3 8.500.2 12.600.5c4.700.3 7.200 3.500 6.600 7.800l-.6 3.600-1.500-.2c.6-3.600-.2-5.800-2.200-6.900-2.800-1.300-6.300-.9-7.900.8-.9 1-1.100 2.300-1.200 3.800z" fill="#2a1e17"/><path d="M5.400 9.600l12.600-.9" stroke="#4a3a33" stroke-width=".9" fill="none" opacity=".85"/><path d="M6.700 9.300h4.300v2.300H6.700zM12.300 8.900h4.300v2.400h-4.300z" fill="none" stroke="#5a4740" stroke-width=".55" opacity=".8"/><path d="M9.200 14.100c1.800.9 3.900.8 5.600-.4-.4 2.400-4.600 2.900-5.600.4z" fill="#b5605a"/><path d="M9.800 14.300c1.500.6 3.100.5 4.400-.2-.5 1.300-3.500 1.500-4.400.2z" fill="#fff"/></g></g></svg>
<svg style="left:1074.7px;top:603.7px;" width="15" height="15" viewBox="0 0 15 15" preserveAspectRatio="none"><circle cx="7.500" cy="7.500" r="6.300" fill="none" stroke="#6f767d" stroke-width="1.700"/><path d="M8 3.600v4.500H4.700" fill="none" stroke="#6f767d" stroke-width="1.300"/></svg>
<div style="left:1718px;top:602px;width:35px;height:19px;background:#46a0b8;border-radius:10px"></div>
<div style="left:0px;top:629px;width:1918px;height:44px;background:#eeeeee;"></div>
<span style="left:43.45px;top:10.80px;font-size:16.6px;color:rgba(255,255,255,.92);letter-spacing:0.036px;">Purchase</span>
<span style="left:137.50px;top:13.00px;font-size:13px;color:rgba(255,255,255,.92);letter-spacing:0.250px;">Orders</span>
<span style="left:201.90px;top:13.00px;font-size:13px;color:rgba(255,255,255,.92);letter-spacing:0.350px;">Products</span>
<span style="left:278.40px;top:13.00px;font-size:13px;color:rgba(255,255,255,.92);letter-spacing:0.562px;">Reporting</span>
<span style="left:362.35px;top:13.00px;font-size:13px;color:rgba(255,255,255,.92);letter-spacing:0.438px;">Configuration</span>
<span style="left:1405.20px;top:9.00px;font-size:12.5px;-webkit-text-stroke:0.5px;color:#fff;">5</span>
<span style="left:1450.20px;top:9.00px;font-size:12.5px;-webkit-text-stroke:0.5px;color:#fff;letter-spacing:0.500px;">11</span>
<span style="left:1485.00px;top:13.00px;font-size:13px;color:rgba(255,255,255,.92);letter-spacing:0.082px;">Webkul Software Pvt. Ltd. (IND)</span>
<span style="left:1717.40px;top:13.00px;font-size:13px;color:rgba(255,255,255,.92);letter-spacing:0.205px;">Mitchell Admin (webkul_addons)</span>
<span style="left:13.80px;top:49.80px;font-size:18px;color:#4c5560;letter-spacing:0.462px;">Requests for Quotation</span>
<span style="left:24.75px;top:87.90px;font-size:12.3px;font-weight:700;color:#fff;letter-spacing:0.350px;">NEW</span>
<span style="left:962.25px;top:49.00px;font-size:13px;color:#d5d9de;letter-spacing:-0.469px;">Search...</span>
<span style="left:981.75px;top:88.30px;font-size:13px;-webkit-text-stroke:0.5px;color:#3f4650;letter-spacing:0.617px;">Filters</span>
<span style="left:1055.75px;top:88.30px;font-size:13px;-webkit-text-stroke:0.5px;color:#3f4650;">Group By</span>
<span style="left:1144.95px;top:88.30px;font-size:13px;-webkit-text-stroke:0.5px;color:#3f4650;letter-spacing:0.312px;">Favorites</span>
<span style="left:1592.00px;top:87.00px;font-size:13px;letter-spacing:0.056px;">1-10 / 10</span>
<span style="left:15.40px;top:158.20px;font-size:13px;letter-spacing:-0.386px;">All RFQs</span>
<span style="left:14.40px;top:203.40px;font-size:13px;letter-spacing:-0.400px;">My RFQs</span>
<span style="left:196.50px;top:144.80px;font-size:19.5px;color:#fff;">7</span>
<span style="left:178.75px;top:173.30px;font-size:13px;color:#fff;letter-spacing:-0.125px;">To Send</span>
<span style="left:197.75px;top:203.40px;font-size:13px;">6</span>
<span style="left:365.62px;top:144.80px;font-size:19.5px;color:#fff;">0</span>
<span style="left:348.25px;top:173.30px;font-size:13px;color:#fff;letter-spacing:0.583px;">Waiting</span>
<span style="left:366.88px;top:203.40px;font-size:13px;">0</span>
<span style="left:534.62px;top:144.80px;font-size:19.5px;color:#fff;">8</span>
<span style="left:526.00px;top:173.30px;font-size:13px;color:#fff;letter-spacing:0.750px;">Late</span>
<span style="left:535.88px;top:203.40px;font-size:13px;">7</span>
<span style="left:1220.20px;top:150.00px;font-size:13px;letter-spacing:0.132px;">Avg Order Value</span>
<span style="left:1183.20px;top:198.00px;font-size:13px;letter-spacing:0.005px;">Lead Time to Purchase</span>
<span style="left:1378.70px;top:150.00px;font-size:13px;letter-spacing:-0.072px;">$ 3,408.00</span>
<span style="left:1389.45px;top:198.00px;font-size:13px;letter-spacing:-0.400px;">0 Days</span>
<span style="left:1572.60px;top:150.00px;font-size:13px;letter-spacing:-0.165px;">Purchased Last 7 Days</span>
<span style="left:1573.40px;top:198.00px;font-size:13px;letter-spacing:-0.305px;">RFQs Sent Last 7 Days</span>
<span style="left:1782.30px;top:150.00px;font-size:13px;letter-spacing:-0.117px;">$ 6,816.00</span>
<span style="left:1808.38px;top:198.00px;font-size:13px;">0</span>
<span style="left:79.05px;top:260.20px;font-size:13px;-webkit-text-stroke:0.5px;color:#212529;letter-spacing:0.312px;">Reference</span>
<span style="left:224.85px;top:260.20px;font-size:13px;-webkit-text-stroke:0.5px;color:#212529;letter-spacing:0.420px;">Vendor</span>
<span style="left:390.25px;top:260.20px;font-size:13px;-webkit-text-stroke:0.5px;color:#212529;letter-spacing:-0.042px;">Company</span>
<span style="left:692.75px;top:260.20px;font-size:13px;-webkit-text-stroke:0.5px;color:#212529;letter-spacing:0.438px;">Buyer</span>
<span style="left:878.50px;top:260.20px;font-size:13px;-webkit-text-stroke:0.5px;color:#212529;letter-spacing:0.346px;">Order Deadline</span>
<span style="left:1072.00px;top:260.20px;font-size:13px;-webkit-text-stroke:0.5px;color:#212529;letter-spacing:0.556px;">Activities</span>
<span style="left:1341.65px;top:260.20px;font-size:13px;-webkit-text-stroke:0.5px;color:#212529;letter-spacing:0.143px;">Source Document</span>
<span style="left:1718.65px;top:260.20px;font-size:13px;-webkit-text-stroke:0.5px;color:#212529;letter-spacing:0.300px;">Status</span>
<span style="left:1680.50px;top:260.20px;font-size:13px;-webkit-text-stroke:0.5px;color:#212529;letter-spacing:0.737px;">Total</span>
<span style="left:78.85px;top:298.00px;font-size:13px;-webkit-text-stroke:0.5px;letter-spacing:0.150px;">P00010</span>
<span style="left:224.40px;top:298.00px;font-size:13px;letter-spacing:0.296px;">Azure Interior</span>
<span style="left:390.00px;top:298.00px;font-size:13px;letter-spacing:0.083px;">Webkul Software Pvt. Ltd. (IND)</span>
<span style="left:715.80px;top:298.00px;font-size:13px;letter-spacing:0.423px;">Mitchell Admin</span>
<span style="left:1650.45px;top:298.00px;font-size:13px;-webkit-text-stroke:0.5px;letter-spacing:-0.100px;">$ 1,080.00</span>
<span style="left:1722.75px;top:298.50px;font-size:12px;font-weight:700;color:#fff;letter-spacing:0.288px;">Purchase Order</span>
<span style="left:78.85px;top:332.00px;font-size:13px;-webkit-text-stroke:0.5px;letter-spacing:0.150px;">P00009</span>
<span style="left:223.40px;top:332.00px;font-size:13px;letter-spacing:0.081px;">Ready Mat</span>
<span style="left:390.00px;top:332.00px;font-size:13px;letter-spacing:0.083px;">Webkul Software Pvt. Ltd. (IND)</span>
<span style="left:715.80px;top:332.00px;font-size:13px;letter-spacing:0.423px;">Mitchell Admin</span>
<span style="left:1650.45px;top:332.00px;font-size:13px;-webkit-text-stroke:0.5px;letter-spacing:-0.100px;">$ 5,736.00</span>
<span style="left:1722.75px;top:332.50px;font-size:12px;font-weight:700;color:#fff;letter-spacing:0.288px;">Purchase Order</span>
<span style="left:78.85px;top:366.00px;font-size:13px;-webkit-text-stroke:0.5px;color:#1f8ab0;letter-spacing:0.150px;">P00008</span>
<span style="left:224.40px;top:366.00px;font-size:13px;color:#1f8ab0;letter-spacing:0.070px;">Wood Corner</span>
<span style="left:390.00px;top:366.00px;font-size:13px;color:#1f8ab0;letter-spacing:0.083px;">Webkul Software Pvt. Ltd. (IND)</span>
<span style="left:715.80px;top:366.00px;font-size:13px;color:#1f8ab0;letter-spacing:0.492px;">OdooBot</span>
<span style="left:878.50px;top:366.00px;font-size:13px;-webkit-text-stroke:0.5px;color:#9a6b01;letter-spacing:0.125px;">Today</span>
<span style="left:1669.05px;top:366.00px;font-size:13px;color:#1f8ab0;letter-spacing:-0.208px;">$ 40.00</span>
<span style="left:1722.50px;top:366.50px;font-size:12px;font-weight:700;color:#fff;letter-spacing:0.125px;">RFQ</span>
<span style="left:78.85px;top:400.00px;font-size:13px;-webkit-text-stroke:0.5px;color:#1f8ab0;letter-spacing:0.150px;">P00007</span>
<span style="left:223.40px;top:400.00px;font-size:13px;color:#1f8ab0;letter-spacing:0.081px;">Ready Mat</span>
<span style="left:390.00px;top:400.00px;font-size:13px;color:#1f8ab0;letter-spacing:0.083px;">Webkul Software Pvt. Ltd. (IND)</span>
<span style="left:715.80px;top:400.00px;font-size:13px;color:#1f8ab0;letter-spacing:0.423px;">Mitchell Admin</span>
<span style="left:878.50px;top:400.00px;font-size:13px;-webkit-text-stroke:0.5px;color:#9a6b01;letter-spacing:0.125px;">Today</span>
<span style="left:1093.15px;top:400.00px;font-size:13px;color:#1f8ab0;letter-spacing:0.188px;">Check competitors</span>
<span style="left:1651.05px;top:400.00px;font-size:13px;color:#1f8ab0;letter-spacing:-0.139px;">$ 1,222.50</span>
<span style="left:1722.50px;top:400.50px;font-size:12px;font-weight:700;color:#fff;letter-spacing:0.125px;">RFQ</span>
<span style="left:78.85px;top:434.00px;font-size:13px;-webkit-text-stroke:0.5px;color:#1f8ab0;letter-spacing:0.150px;">P00006</span>
<span style="left:224.40px;top:434.00px;font-size:13px;color:#1f8ab0;letter-spacing:0.070px;">Wood Corner</span>
<span style="left:390.00px;top:434.00px;font-size:13px;color:#1f8ab0;letter-spacing:0.083px;">Webkul Software Pvt. Ltd. (IND)</span>
<span style="left:715.80px;top:434.00px;font-size:13px;color:#1f8ab0;letter-spacing:0.423px;">Mitchell Admin</span>
<span style="left:878.50px;top:434.00px;font-size:13px;-webkit-text-stroke:0.5px;color:#9a6b01;letter-spacing:0.125px;">Today</span>
<span style="left:1093.15px;top:434.00px;font-size:13px;color:#1f8ab0;letter-spacing:0.193px;">Check optional products</span>
<span style="left:1651.05px;top:434.00px;font-size:13px;color:#1f8ab0;letter-spacing:-0.139px;">$ 1,335.00</span>
<span style="left:1722.50px;top:434.50px;font-size:12px;font-weight:700;color:#fff;letter-spacing:0.125px;">RFQ</span>
<span style="left:78.85px;top:468.00px;font-size:13px;-webkit-text-stroke:0.5px;color:#1f8ab0;letter-spacing:0.150px;">P00005</span>
<span style="left:223.40px;top:468.00px;font-size:13px;color:#1f8ab0;letter-spacing:0.285px;">Deco Addict</span>
<span style="left:390.00px;top:468.00px;font-size:13px;color:#1f8ab0;letter-spacing:0.083px;">Webkul Software Pvt. Ltd. (IND)</span>
<span style="left:715.80px;top:468.00px;font-size:13px;color:#1f8ab0;letter-spacing:0.423px;">Mitchell Admin</span>
<span style="left:878.50px;top:468.00px;font-size:13px;-webkit-text-stroke:0.5px;color:#9a6b01;letter-spacing:0.125px;">Today</span>
<span style="left:1093.40px;top:468.00px;font-size:13px;color:#1f8ab0;letter-spacing:0.182px;">Get approval</span>
<span style="left:1651.05px;top:468.00px;font-size:13px;color:#1f8ab0;letter-spacing:-0.139px;">$ 8,658.00</span>
<span style="left:1722.50px;top:468.50px;font-size:12px;font-weight:700;color:#fff;letter-spacing:0.125px;">RFQ</span>
<span style="left:78.85px;top:502.00px;font-size:13px;-webkit-text-stroke:0.5px;color:#1f8ab0;letter-spacing:0.100px;">P00004</span>
<span style="left:223.40px;top:502.00px;font-size:13px;color:#1f8ab0;letter-spacing:0.081px;">Ready Mat</span>
<span style="left:390.00px;top:502.00px;font-size:13px;color:#1f8ab0;letter-spacing:0.083px;">Webkul Software Pvt. Ltd. (IND)</span>
<span style="left:715.80px;top:502.00px;font-size:13px;color:#1f8ab0;letter-spacing:0.423px;">Mitchell Admin</span>
<span style="left:878.50px;top:502.00px;font-size:13px;-webkit-text-stroke:0.5px;color:#9a6b01;letter-spacing:0.125px;">Today</span>
<span style="left:1643.55px;top:502.00px;font-size:13px;color:#1f8ab0;letter-spacing:-0.100px;">$ 14,563.00</span>
<span style="left:1722.75px;top:502.50px;font-size:12px;font-weight:700;color:#fff;letter-spacing:0.179px;">RFQ Sent</span>
<span style="left:78.85px;top:536.00px;font-size:13px;-webkit-text-stroke:0.5px;color:#1f8ab0;letter-spacing:0.150px;">P00003</span>
<span style="left:224.40px;top:536.00px;font-size:13px;color:#1f8ab0;letter-spacing:0.296px;">Azure Interior</span>
<span style="left:390.00px;top:536.00px;font-size:13px;color:#1f8ab0;letter-spacing:0.083px;">Webkul Software Pvt. Ltd. (IND)</span>
<span style="left:715.80px;top:536.00px;font-size:13px;color:#1f8ab0;letter-spacing:0.423px;">Mitchell Admin</span>
<span style="left:878.50px;top:536.00px;font-size:13px;-webkit-text-stroke:0.5px;color:#9a6b01;letter-spacing:0.125px;">Today</span>
<span style="left:1661.55px;top:536.00px;font-size:13px;color:#1f8ab0;letter-spacing:-0.143px;">$ 255.00</span>
<span style="left:1722.50px;top:536.50px;font-size:12px;font-weight:700;color:#fff;letter-spacing:0.125px;">RFQ</span>
<span style="left:78.85px;top:570.00px;font-size:13px;-webkit-text-stroke:0.5px;color:#1f8ab0;letter-spacing:0.150px;">P00002</span>
<span style="left:223.90px;top:570.00px;font-size:13px;color:#1f8ab0;letter-spacing:0.137px;">Gemini Furniture</span>
<span style="left:390.00px;top:570.00px;font-size:13px;color:#1f8ab0;letter-spacing:0.083px;">Webkul Software Pvt. Ltd. (IND)</span>
<span style="left:715.80px;top:570.00px;font-size:13px;color:#1f8ab0;letter-spacing:0.423px;">Mitchell Admin</span>
<span style="left:878.50px;top:570.00px;font-size:13px;-webkit-text-stroke:0.5px;color:#9a6b01;letter-spacing:0.125px;">Today</span>
<span style="left:1093.15px;top:570.00px;font-size:13px;color:#1f8ab0;letter-spacing:0.097px;">Send specifications</span>
<span style="left:1651.05px;top:570.00px;font-size:13px;color:#1f8ab0;letter-spacing:-0.139px;">$ 3,095.00</span>
<span style="left:1722.50px;top:570.50px;font-size:12px;font-weight:700;color:#fff;letter-spacing:0.125px;">RFQ</span>
<span style="left:78.85px;top:604.00px;font-size:13px;-webkit-text-stroke:0.5px;color:#1f8ab0;letter-spacing:0.150px;">P00001</span>
<span style="left:224.40px;top:604.00px;font-size:13px;color:#1f8ab0;letter-spacing:0.070px;">Wood Corner</span>
<span style="left:390.00px;top:604.00px;font-size:13px;color:#1f8ab0;letter-spacing:0.083px;">Webkul Software Pvt. Ltd. (IND)</span>
<span style="left:715.80px;top:604.00px;font-size:13px;color:#1f8ab0;letter-spacing:0.423px;">Mitchell Admin</span>
<span style="left:878.50px;top:604.00px;font-size:13px;-webkit-text-stroke:0.5px;color:#9a6b01;letter-spacing:0.125px;">Today</span>
<span style="left:1651.05px;top:604.00px;font-size:13px;color:#1f8ab0;letter-spacing:-0.139px;">$ 3,026.50</span>
<span style="left:1722.50px;top:604.50px;font-size:12px;font-weight:700;color:#fff;letter-spacing:0.125px;">RFQ</span>
<span style="left:1652.65px;top:644.00px;font-size:13px;font-weight:700;color:#3f444a;letter-spacing:0.206px;">39,011.00</span>
</div></body></html>
